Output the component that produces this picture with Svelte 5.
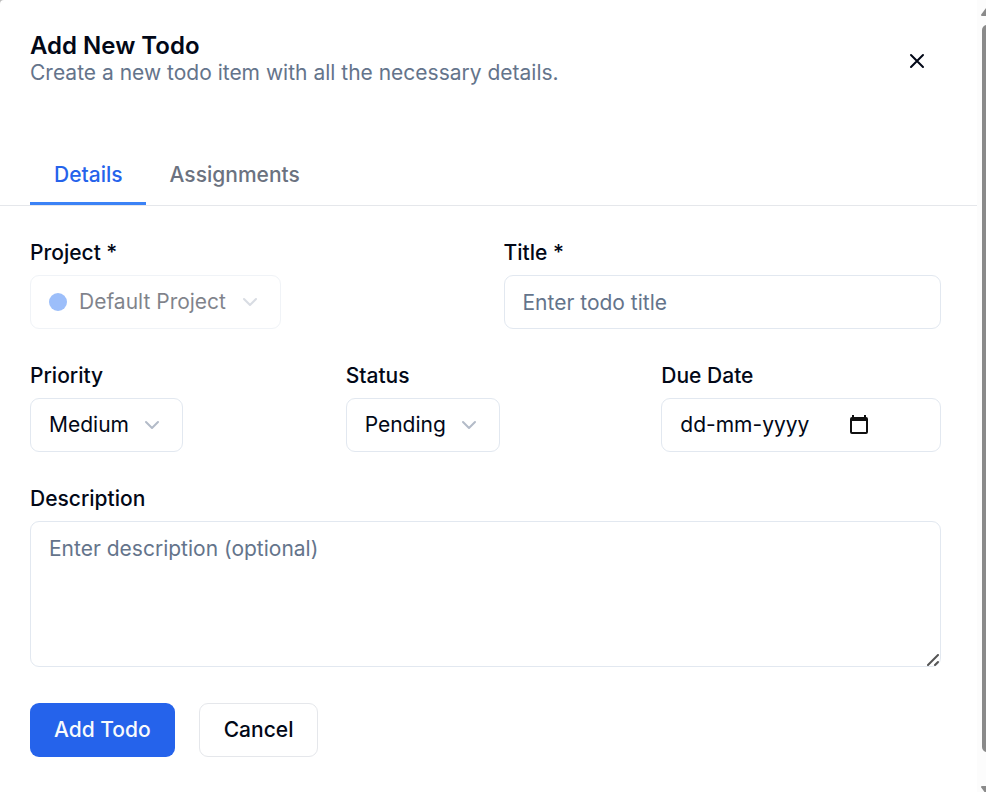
<script>
  let tab = $state('details');
  let project = $state('Default Project');
  let priority = $state('Medium');
  let status = $state('Pending');
  let title = $state('');
  let due = $state('');
  let description = $state('');
</script>

{#snippet chevron()}
  <svg class="chevron" viewBox="0 0 24 24" aria-hidden="true"><path d="m6 9 6 6 6-6" /></svg>
{/snippet}

<div class="shell">
  <main>
    <header>
      <div>
        <h1>Add New Todo</h1>
        <p>Create a new todo item with all the necessary details.</p>
      </div>
      <button class="close" type="button" aria-label="Close">
        <svg viewBox="0 0 24 24" aria-hidden="true"><path d="M18 6 6 18M6 6l12 12" /></svg>
      </button>
    </header>

    <div class="tabs" role="tablist">
      <button type="button" role="tab" aria-selected={tab === 'details'} class:active={tab === 'details'} onclick={() => (tab = 'details')}>Details</button>
      <button type="button" role="tab" aria-selected={tab === 'assignments'} class:active={tab === 'assignments'} onclick={() => (tab = 'assignments')}>Assignments</button>
    </div>

    <form onsubmit={(e) => e.preventDefault()}>
      <div class="row two">
        <div class="field">
          <label for="project">Project *</label>
          <div class="select project">
            <span class="dot"></span>
            <select id="project" bind:value={project} disabled>
              <option>Default Project</option>
            </select>
            {@render chevron()}
          </div>
        </div>
        <div class="field">
          <label for="title">Title *</label>
          <input id="title" class="box" type="text" placeholder="Enter todo title" bind:value={title} />
        </div>
      </div>

      <div class="row three">
        <div class="field">
          <label for="priority">Priority</label>
          <div class="select">
            <select id="priority" bind:value={priority}>
              <option>Low</option>
              <option>Medium</option>
              <option>High</option>
            </select>
            {@render chevron()}
          </div>
        </div>
        <div class="field">
          <label for="status">Status</label>
          <div class="select">
            <select id="status" bind:value={status}>
              <option>Pending</option>
              <option>Completed</option>
            </select>
            {@render chevron()}
          </div>
        </div>
        <div class="field">
          <label for="due">Due Date</label>
          <div class="box date">
            <input id="due" type="text" placeholder="dd-mm-yyyy" bind:value={due} />
            <button type="button" aria-label="Open calendar">
              <svg viewBox="0 0 18 20" aria-hidden="true">
                <path fill-rule="evenodd" d="M2 0h2v2h10V0h2v2a2 2 0 0 1 2 2v13a2 2 0 0 1-2 2H2a2 2 0 0 1-2-2V4a2 2 0 0 1 2-2zM2 6v11h14V6z" />
              </svg>
            </button>
          </div>
        </div>
      </div>

      <div class="field">
        <label for="description">Description</label>
        <div class="area">
          <textarea id="description" class="box" placeholder="Enter description (optional)" bind:value={description}></textarea>
          <svg class="grip" viewBox="0 0 12 12" aria-hidden="true"><path d="M1 11 11 1M8 11l3-3" /></svg>
        </div>
      </div>

      <div class="actions">
        <button class="primary" type="submit">Add Todo</button>
        <button class="secondary" type="button">Cancel</button>
      </div>
    </form>
  </main>

  <div class="scrollbar" aria-hidden="true">
    <svg class="arrow" viewBox="0 0 14 10"><path d="M7 1 13 9H1z" /></svg>
    <div class="thumb"></div>
    <svg class="arrow" viewBox="0 0 14 10"><path d="M1 1h12L7 9z" /></svg>
  </div>
</div>

<style>
  :global(body) {
    background: #bbb;
  }
  .shell {
    display: flex;
    min-height: 100vh;
    box-sizing: border-box;
    overflow: hidden;
    background: #fff;
    border-top-left-radius: 4px;
    color: #020817;
    font: 400 21px/30px Inter, sans-serif;
  }
  main {
    flex: 1;
    min-width: 0;
  }
  button,
  input,
  select,
  textarea {
    font: inherit;
    color: inherit;
    margin: 0;
    box-sizing: border-box;
  }
  button {
    cursor: pointer;
    background: none;
    border: 0;
    padding: 0;
  }
  header {
    display: flex;
    justify-content: space-between;
    align-items: flex-start;
    padding: 34px 36px 60px 30px;
  }
  h1,
  p {
    margin: 0;
  }
  h1 {
    font-size: 24px;
    line-height: 24px;
    font-weight: 600;
  }
  p {
    color: #64748b;
  }
  .close {
    width: 48px;
    height: 54px;
    display: grid;
    place-items: center;
  }
  .close svg {
    width: 24px;
    height: 24px;
    fill: none;
    stroke: currentColor;
    stroke-width: 2;
    stroke-linecap: round;
  }
  .tabs {
    display: flex;
    padding: 0 30px;
    border-bottom: 1px solid #e5e7eb;
  }
  .tabs button {
    padding: 12px 23px 12px 24px;
    border-bottom: 3px solid transparent;
    font-weight: 500;
    color: #6b7280;
  }
  .tabs .active {
    color: #2563eb;
    border-color: #3b82f6;
  }
  form {
    display: flex;
    flex-direction: column;
    gap: 36px;
    padding: 36px 36px 35px 30px;
  }
  .row {
    display: grid;
    gap: 36px;
  }
  .two {
    grid-template-columns: 1fr 1fr;
  }
  .three {
    grid-template-columns: repeat(3, minmax(0, 1fr));
  }
  .field {
    display: flex;
    flex-direction: column;
    align-items: flex-start;
    gap: 12px;
    min-width: 0;
  }
  label {
    line-height: 21px;
    font-weight: 500;
  }
  .box,
  .select select {
    border: 1px solid #e2e8f0;
    border-radius: 9px;
    background: #fff;
    outline: none;
  }
  .box {
    width: 100%;
    height: 54px;
    padding: 0 18px;
    box-sizing: border-box;
  }
  .box::placeholder {
    color: #64748b;
    opacity: 1;
  }
  .select {
    display: grid;
    align-items: center;
  }
  .select > * {
    grid-area: 1 / 1;
  }
  .select select {
    appearance: none;
    field-sizing: content;
    height: 54px;
    padding: 0 53px 0 18px;
    opacity: 1;
  }
  .chevron {
    z-index: 1;
    justify-self: end;
    width: 24px;
    height: 24px;
    margin-right: 19px;
    pointer-events: none;
    fill: none;
    stroke: #b3bbc8;
    stroke-width: 2;
    stroke-linecap: round;
    stroke-linejoin: round;
  }
  .project {
    opacity: 0.5;
  }
  .select.project select {
    padding: 0 54px 0 48px;
  }
  .dot {
    z-index: 1;
    width: 18px;
    height: 18px;
    margin-left: 19px;
    border-radius: 50%;
    background: #3b7ff6;
  }
  .date {
    display: flex;
    align-items: center;
  }
  .date input {
    width: 170px;
    min-width: 0;
    border: 0;
    padding: 0;
    outline: none;
    background: none;
  }
  .date input::placeholder {
    color: #020817;
    opacity: 1;
  }
  .date svg {
    display: block;
    width: 18px;
    height: 20px;
    fill: #101010;
  }
  .area {
    position: relative;
    width: 100%;
  }
  textarea.box {
    display: block;
    height: 146px;
    padding: 12px 18px;
    resize: none;
  }
  .grip {
    position: absolute;
    right: 2px;
    bottom: 1px;
    width: 12px;
    height: 12px;
    pointer-events: none;
    fill: none;
    stroke: #555;
    stroke-width: 2;
    stroke-linecap: round;
  }
  .actions {
    display: flex;
    gap: 24px;
  }
  .actions button {
    height: 54px;
    padding: 0 24px;
    border-radius: 9px;
    font-weight: 500;
  }
  .primary {
    background: #2563eb;
    color: #f8fafc;
  }
  .actions .secondary {
    border: 1px solid #e5e7eb;
  }
  .scrollbar {
    display: flex;
    flex-direction: column;
    width: 9px;
    box-sizing: border-box;
    padding: 6px 0 0 4px;
    overflow: hidden;
    background: #fcfcfc;
  }
  .arrow {
    flex: none;
    width: 14px;
    height: 10px;
    fill: #8a8a8a;
    stroke: #8a8a8a;
    stroke-width: 2;
    stroke-linejoin: round;
  }
  .thumb {
    flex: 1;
    width: 10px;
    margin: 9px 0 34px 1px;
    border-radius: 5px;
    background: #8a8a8a;
  }
  .scrollbar .arrow:last-child {
    margin-bottom: -4px;
  }
</style>
